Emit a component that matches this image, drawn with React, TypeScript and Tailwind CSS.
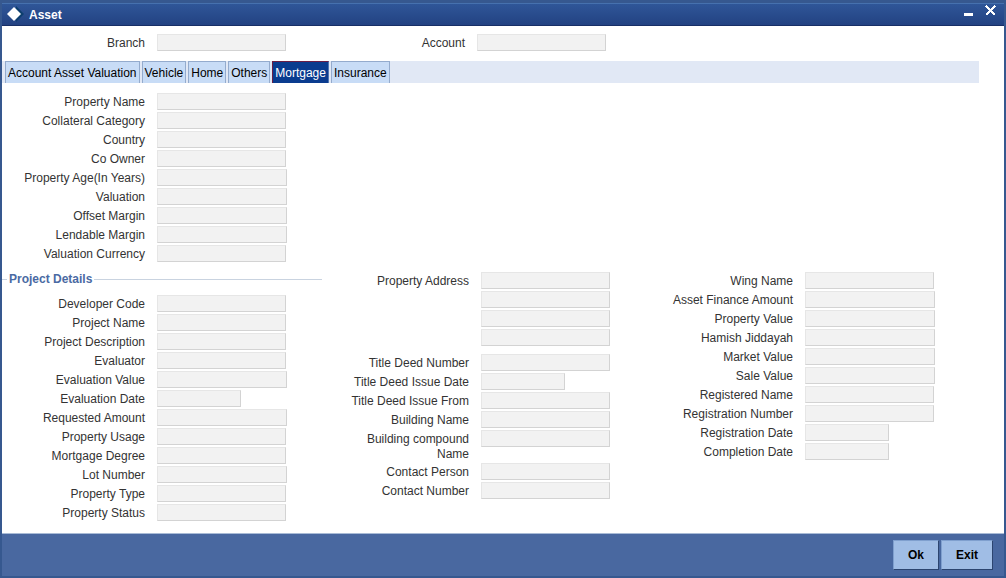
import { useId, useState } from 'react'
import type { ReactNode } from 'react'
import clsx from 'clsx'

type FieldSize = 'text' | 'amount' | 'date'

interface FieldDef {
  label: string
  size?: FieldSize
  lines?: number
}

const inputWidths: Record<FieldSize, string> = {
  text: 'w-[129px]',
  amount: 'w-[130px]',
  date: 'w-[84px]',
}

const tabs = ['Account Asset Valuation', 'Vehicle', 'Home', 'Others', 'Mortgage', 'Insurance']

const propertyFields: FieldDef[] = [
  { label: 'Property Name' },
  { label: 'Collateral Category' },
  { label: 'Country' },
  { label: 'Co Owner' },
  { label: 'Property Age(In Years)', size: 'amount' },
  { label: 'Valuation', size: 'amount' },
  { label: 'Offset Margin', size: 'amount' },
  { label: 'Lendable Margin', size: 'amount' },
  { label: 'Valuation Currency' },
]

const projectFields: FieldDef[] = [
  { label: 'Developer Code' },
  { label: 'Project Name' },
  { label: 'Project Description' },
  { label: 'Evaluator' },
  { label: 'Evaluation Value', size: 'amount' },
  { label: 'Evaluation Date', size: 'date' },
  { label: 'Requested Amount', size: 'amount' },
  { label: 'Property Usage' },
  { label: 'Mortgage Degree' },
  { label: 'Lot Number', size: 'amount' },
  { label: 'Property Type' },
  { label: 'Property Status' },
]

const deedFields: FieldDef[] = [
  { label: 'Title Deed Number' },
  { label: 'Title Deed Issue Date', size: 'date' },
  { label: 'Title Deed Issue From' },
  { label: 'Building Name' },
  { label: 'Building compound Name' },
  { label: 'Contact Person' },
  { label: 'Contact Number' },
]

const financeFields: FieldDef[] = [
  { label: 'Wing Name' },
  { label: 'Asset Finance Amount', size: 'amount' },
  { label: 'Property Value', size: 'amount' },
  { label: 'Hamish Jiddayah', size: 'amount' },
  { label: 'Market Value', size: 'amount' },
  { label: 'Sale Value', size: 'amount' },
  { label: 'Registered Name' },
  { label: 'Registration Number' },
  { label: 'Registration Date', size: 'date' },
  { label: 'Completion Date', size: 'date' },
]

function Field({ label, size = 'text', lines = 1 }: FieldDef) {
  const id = useId()
  return (
    <div className="flex min-h-[19px] items-start gap-3">
      <label
        htmlFor={id}
        className="ml-[18px] w-[125px] shrink-0 pt-[2px] pb-px text-right leading-[15px]"
      >
        {label}
      </label>
      <div className="flex flex-col gap-[2px]">
        {Array.from({ length: lines }, (_, i) => (
          <input
            key={i}
            id={i === 0 ? id : undefined}
            aria-label={i === 0 ? undefined : `${label} line ${i + 1}`}
            type="text"
            readOnly
            className={clsx(
              'block h-[17px] border border-t-[#e6e6e6] border-r-[#d3d3d3] border-b-[#d3d3d3] border-l-[#e6e6e6] bg-[#f2f2f2] px-1 outline-none',
              inputWidths[size],
            )}
          />
        ))}
      </div>
    </div>
  )
}

function FieldList({ fields }: { fields: FieldDef[] }) {
  return (
    <>
      {fields.map((field) => (
        <Field key={field.label} {...field} />
      ))}
    </>
  )
}

function FooterButton({ children }: { children: ReactNode }) {
  return (
    <button
      type="button"
      className="h-[30px] border border-t-[#7f9fce] border-r-[#2c4570] border-b-[#2c4570] border-l-[#7f9fce] bg-[#a0bde5] px-[14px] font-bold text-black"
    >
      {children}
    </button>
  )
}

function TitleBar() {
  return (
    <header className="flex h-[23px] items-center border-t border-b border-t-[#4671ae] border-b-[#182f66] bg-linear-to-b from-[#2f5698] to-[#234282] pr-2 pl-[5px]">
      <svg width="17" height="17" viewBox="0 0 17 17" aria-hidden="true">
        <path d="M9 0 L17 8 L9 16 Z" fill="#0d3f6e" />
        <path d="M7 1 L14 8 L7 15 L0 8 Z" fill="#fff" />
      </svg>
      <h1 className="ml-[5px] flex-1 font-bold text-white">Asset</h1>
      <div className="flex gap-3 self-start pt-px">
        <button type="button" aria-label="Minimize">
          <svg width="9" height="11" viewBox="0 0 9 11" className="block">
            <path d="M0 8h9v3H0z" fill="#fff" />
          </svg>
        </button>
        <button type="button" aria-label="Close">
          <svg width="11" height="11" viewBox="0 0 11 11" className="block" shapeRendering="crispEdges">
            <path d="M1 1 L10 10 M10 1 L1 10" stroke="#fff" strokeWidth="2.2" />
          </svg>
        </button>
      </div>
    </header>
  )
}

export default function App() {
  const [activeTab, setActiveTab] = useState('Mortgage')

  return (
    <div className="flex min-h-screen flex-col border-2 border-t-[3px] border-[#36588f] bg-white font-['Liberation_Sans',Arial,sans-serif] text-xs text-[#333]">
      <TitleBar />

      <main className="flex-1 pt-2 pb-[10px]">
        <div className="mr-[42px] grid grid-cols-3">
          <Field label="Branch" />
          <Field label="Account" />
        </div>

        <div role="tablist" className="mt-2 mr-[25px] flex h-[22px] gap-[2px] bg-[#e1e8f5] pl-[3px]">
          {tabs.map((tab) => (
            <button
              key={tab}
              type="button"
              role="tab"
              aria-selected={tab === activeTab}
              onClick={() => setActiveTab(tab)}
              className={clsx(
                'border border-b-0 px-[2px]',
                tab === activeTab
                  ? 'border-t-[#6b1f45] border-r-[#4f76b4] border-l-[#6b1f45] bg-[#0a3c8f] text-white'
                  : 'border-[#94abcd] bg-[#c8dcf6] text-black',
              )}
            >
              {tab}
            </button>
          ))}
        </div>

        <div className="mt-[10px] mr-[34px]">
          <FieldList fields={propertyFields} />

          <div className="mt-2 grid grid-cols-3 gap-1">
            <fieldset className="border-t border-[#c9d3e0]">
              <legend className="mb-2 ml-[5px] px-[2px] leading-[15px] font-bold text-[#4a6aa3]">
                Project Details
              </legend>
              <FieldList fields={projectFields} />
            </fieldset>

            <div>
              <div className="mb-2">
                <Field label="Property Address" lines={4} />
              </div>
              <FieldList fields={deedFields} />
            </div>

            <div>
              <FieldList fields={financeFields} />
            </div>
          </div>
        </div>
      </main>

      <footer className="flex justify-end gap-[2px] border-t border-[#a9bbd6] bg-[#4968a0] py-[6px] pr-[11px]">
        <FooterButton>Ok</FooterButton>
        <FooterButton>Exit</FooterButton>
      </footer>
    </div>
  )
}
